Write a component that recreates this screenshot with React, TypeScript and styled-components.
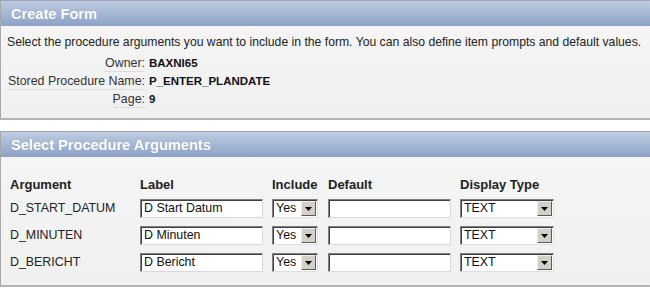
import React from "react";
import styled, { createGlobalStyle } from "styled-components";

const Global = createGlobalStyle`
  html, body { margin: 0; padding: 0; background: #ffffff; }
  body { font-family: "Liberation Sans", Arial, sans-serif; font-size: 12.4px; color: #000; overflow: hidden; }
`;

const Page = styled.div`
  display: flex;
  flex-direction: column;
  gap: 11px;
  width: 660px;
`;

const Region = styled.section`
  border-left: 1px solid #a8a8a8;
  border-bottom: 2px solid #b4b4b4;
  background: linear-gradient(#f6f6f6, #f0f0f0);
`;

const RegionHeader = styled.div`
  height: 26px;
  box-sizing: border-box;
  border-top: 1px solid #9aa6ba;
  background: linear-gradient(#bfcce2, #8ca2c6);
  display: flex;
  align-items: center;
  padding-left: 10px;
  color: #ffffff;
  font-family: "Liberation Sans", Arial, sans-serif;
  font-weight: bold;
  font-size: 14.6px;
  text-shadow: 0 0 1px rgba(60, 80, 120, 0.35);
`;

const RegionBody = styled.div<{ $pad: string; $h: number }>`
  padding: ${(p) => p.$pad};
  height: ${(p) => p.$h}px;
  box-sizing: border-box;
`;

const Intro = styled.div`
  font-size: 12.2px;
  line-height: 16px;
  color: #222;
  margin-bottom: 6px;
  white-space: nowrap;
`;

const InfoGrid = styled.div`
  display: grid;
  grid-template-columns: 138px auto;
  column-gap: 4px;
  row-gap: 3px;
  line-height: 15px;
`;

const InfoLabel = styled.div`
  text-align: right;
  color: #333;
  span {
    border-bottom: 1px solid #dcdcdc;
    padding-bottom: 1px;
  }
`;

const InfoValue = styled.div`
  font-weight: bold;
  font-size: 11.5px;
  color: #111;
`;

const ArgTable = styled.table`
  border-collapse: collapse;
  margin-left: 9px;
  th {
    text-align: left;
    font-weight: bold;
    font-size: 13px;
    line-height: 15px;
    color: #222;
    height: 22px;
    padding: 0;
    vertical-align: top;
  }
  td {
    height: 27px;
    padding: 0;
    vertical-align: top;
    line-height: 19px;
    color: #222;
  }
`;

const TextBox = styled.div<{ $w: number }>`
  width: ${(p) => p.$w}px;
  height: 19px;
  box-sizing: border-box;
  background: #fff;
  border-top: 1px solid #7f7f7f;
  border-left: 1px solid #7f7f7f;
  border-right: 1px solid #d8d8d8;
  border-bottom: 1px solid #d8d8d8;
  box-shadow: inset 1px 1px 0 #404040;
  padding: 1px 0 0 3px;
  font-size: 12.4px;
  line-height: 15px;
  color: #111;
  white-space: nowrap;
  overflow: hidden;
`;

const SelectBox = styled.div<{ $w: number }>`
  width: ${(p) => p.$w}px;
  height: 19px;
  box-sizing: border-box;
  background: #fff;
  border-top: 1px solid #7f7f7f;
  border-left: 1px solid #7f7f7f;
  border-right: 1px solid #e0e0e0;
  border-bottom: 1px solid #e0e0e0;
  box-shadow: inset 1px 1px 0 #404040;
  display: flex;
  align-items: center;
  justify-content: space-between;
  padding: 1px 1px 1px 3px;
  font-size: 12.4px;
  line-height: 15px;
  color: #111;
`;

const ArrowButton = styled.div`
  width: 15px;
  height: 15px;
  box-sizing: border-box;
  background: #d4d0c8;
  border-top: 1px solid #f0f0f0;
  border-left: 1px solid #f0f0f0;
  border-right: 1px solid #5a5a5a;
  border-bottom: 1px solid #5a5a5a;
  display: flex;
  align-items: center;
  justify-content: center;
`;

const Arrow = () => (
  <svg width="7" height="4" viewBox="0 0 7 4">
    <polygon points="0,0 7,0 3.5,4" fill="#000" />
  </svg>
);

const Select = ({ w, value }: { w: number; value: string }) => (
  <SelectBox $w={w}>
    <span>{value}</span>
    <ArrowButton>
      <Arrow />
    </ArrowButton>
  </SelectBox>
);

const args = [
  { name: "D_START_DATUM", label: "D Start Datum" },
  { name: "D_MINUTEN", label: "D Minuten" },
  { name: "D_BERICHT", label: "D Bericht" },
];

export default function App() {
  return (
    <Page>
      <Global />
      <Region>
        <RegionHeader>Create Form</RegionHeader>
        <RegionBody $pad="8px 0 0 6px" $h={92}>
          <Intro>
            Select the procedure arguments you want to include in the form. You can also define item prompts and default values.
          </Intro>
          <InfoGrid>
            <InfoLabel>
              <span>Owner:</span>
            </InfoLabel>
            <InfoValue>BAXNI65</InfoValue>
            <InfoLabel>
              <span>Stored Procedure Name:</span>
            </InfoLabel>
            <InfoValue>P_ENTER_PLANDATE</InfoValue>
            <InfoLabel>
              <span>Page:</span>
            </InfoLabel>
            <InfoValue>9</InfoValue>
          </InfoGrid>
        </RegionBody>
      </Region>
      <Region>
        <RegionHeader>Select Procedure Arguments</RegionHeader>
        <RegionBody $pad="20px 0 0 0" $h={128}>
          <ArgTable>
            <colgroup>
              <col style={{ width: 130 }} />
              <col style={{ width: 132 }} />
              <col style={{ width: 56 }} />
              <col style={{ width: 132 }} />
              <col style={{ width: 100 }} />
            </colgroup>
            <thead>
              <tr>
                <th>Argument</th>
                <th>Label</th>
                <th>Include</th>
                <th>Default</th>
                <th>Display Type</th>
              </tr>
            </thead>
            <tbody>
              {args.map((a) => (
                <tr key={a.name}>
                  <td>{a.name}</td>
                  <td>
                    <TextBox $w={123}>{a.label}</TextBox>
                  </td>
                  <td>
                    <Select w={46} value="Yes" />
                  </td>
                  <td>
                    <TextBox $w={123} />
                  </td>
                  <td>
                    <Select w={94} value="TEXT" />
                  </td>
                </tr>
              ))}
            </tbody>
          </ArgTable>
        </RegionBody>
      </Region>
    </Page>
  );
}
